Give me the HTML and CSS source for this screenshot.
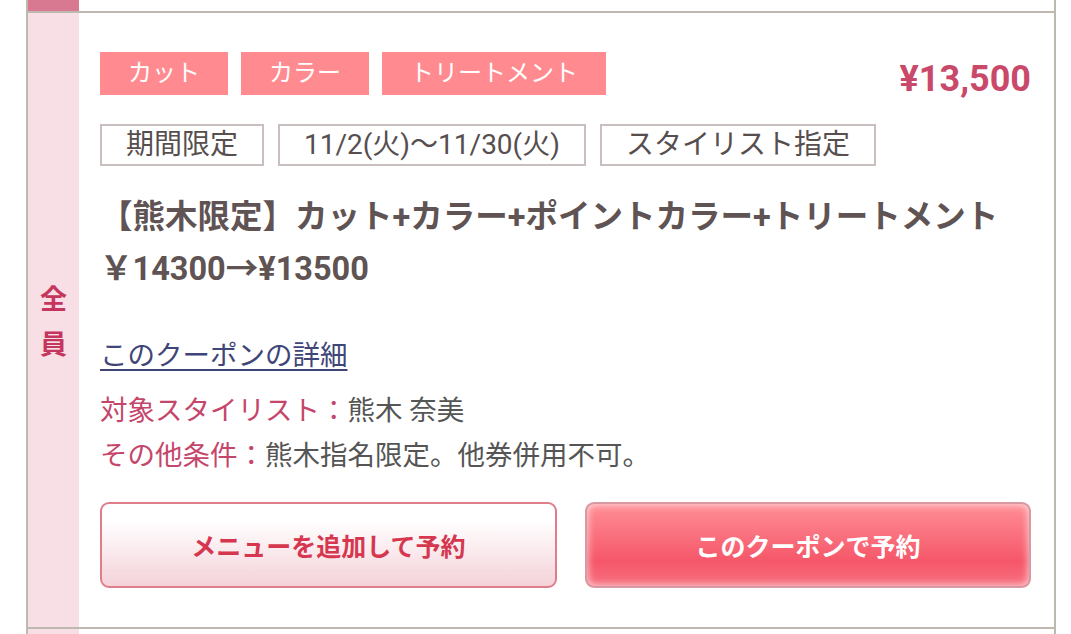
FILE: index.html
```html
<!DOCTYPE html>
<html lang="ja">
<head>
    <meta charset="UTF-8">
    <meta name="viewport" content="width=device-width, initial-scale=1.0">
    <title>クーポン</title>
    <link rel="stylesheet" href="styles.css">
</head>
<body>

    <div class="coupon-list">
        <!-- previous coupon (cut off at the top) -->
        <div class="coupon coupon-prev">
            <div class="coupon-side side-dark"></div>
            <div class="coupon-body"></div>
        </div>

        <div class="coupon">
            <div class="coupon-side">
                <span>全</span>
                <span>員</span>
            </div>
            <div class="coupon-body">
                <div class="top-row">
                    <div class="menu-tags">
                        <span class="menu-tag">カット</span>
                        <span class="menu-tag">カラー</span>
                        <span class="menu-tag">トリートメント</span>
                    </div>
                    <div class="price">¥13,500</div>
                </div>

                <div class="info-tags">
                    <span class="info-tag">期間限定</span>
                    <span class="info-tag">11/2(火)〜11/30(火)</span>
                    <span class="info-tag">スタイリスト指定</span>
                </div>

                <h2 class="coupon-title">【熊木限定】カット+カラー+ポイントカラー+トリートメント<br>￥14300→¥13500</h2>

                <a class="detail-link" href="#">このクーポンの詳細</a>

                <dl class="conditions">
                    <div class="cond-row">
                        <dt>対象スタイリスト：</dt>
                        <dd>熊木 奈美</dd>
                    </div>
                    <div class="cond-row">
                        <dt>その他条件：</dt>
                        <dd>熊木指名限定。他券併用不可。</dd>
                    </div>
                </dl>

                <div class="actions">
                    <button class="btn btn-sub">メニューを追加して予約</button>
                    <button class="btn btn-main">このクーポンで予約</button>
                </div>
            </div>
        </div>

        <!-- next coupon (cut off at the bottom) -->
        <div class="coupon coupon-next">
            <div class="coupon-side"></div>
            <div class="coupon-body"></div>
        </div>
    </div>

</body>
</html>
```

FILE: styles.css
```css
/* page */
html, body {
    margin: 0;
    padding: 0;
    background: #fff;
    height: 100%;
    overflow: hidden;
}

body {
    font-family: Roboto, "Noto Sans CJK JP", sans-serif;
    color: #5a5050;
}

/* list of coupons, framed left and right */
.coupon-list {
    margin-left: 26px;
    width: 1026px;
    border-left: 2px solid #bdb9b0;
    border-right: 2px solid #bdb9b0;
    min-height: 100%;
}

.coupon {
    display: flex;
    border-top: 2px solid #bdb9b0;
}

.coupon-prev {
    border-top: none;
    height: 11px;
}

.coupon-next {
    height: 60px;
}

.coupon-side {
    width: 51px;
    flex-shrink: 0;
    background: #f8dfe5;
    display: flex;
    flex-direction: column;
    justify-content: center;
    align-items: center;
    color: #c4365e;
    font-family: "Noto Sans CJK JP", sans-serif;
    font-size: 27px;
    font-weight: bold;
    line-height: 45px;
}

.side-dark {
    background: #d87891;
}

.coupon-body {
    flex: 1;
    padding: 39px 23px 39px 21px;
}

.coupon-prev .coupon-body,
.coupon-next .coupon-body {
    padding: 0;
}

/* tags + price */
.top-row {
    display: flex;
    justify-content: space-between;
    align-items: flex-start;
}

.menu-tags {
    display: flex;
    gap: 13px;
}

.menu-tag {
    background: #ff8b90;
    color: #fff;
    font-size: 24px;
    line-height: 43px;
    padding: 0 28px;
}

.price {
    font-weight: bold;
    font-size: 36px;
    line-height: 1;
    color: #c9496b;
    padding-top: 9px;
}

.info-tags {
    display: flex;
    gap: 14px;
    margin-top: 27px;
}

.info-tag {
    border: 2px solid #cabfbf;
    font-size: 28px;
    line-height: 38px;
    padding: 0 24px;
    color: #574e4e;
}

/* title */
.coupon-title {
    margin: 25px 0 0 0;
    font-size: 32.5px;
    font-weight: bold;
    line-height: 52px;
    color: #5f5353;
}

.detail-link {
    display: block;
    width: fit-content;
    margin-top: 43px;
    font-size: 27.5px;
    line-height: 36px;
    color: #3f4677;
    text-decoration: underline;
    text-underline-offset: 4px;
}

.conditions {
    margin: 14px 0 0 0;
    font-size: 27.5px;
    line-height: 45px;
}

.cond-row {
    display: flex;
}

.conditions dt {
    color: #c5466b;
}

.conditions dd {
    margin: 0;
    color: #555;
}

/* buttons */
.actions {
    display: grid;
    grid-template-columns: 457px 1fr;
    gap: 28px;
    margin-top: 24px;
}

.btn {
    height: 86px;
    border-radius: 9px;
    font-family: "Noto Sans CJK JP", sans-serif;
    font-size: 25px;
    font-weight: bold;
    cursor: pointer;
}

.btn-sub {
    border: 2px solid #e07d8b;
    background: linear-gradient(#ffffff 20%, #f4d2d9);
    color: #d6374f;
}

.btn-main {
    border: 2px solid #d79aa3;
    background: linear-gradient(#ff8e96, #f55769 70%, #f7707f);
    box-shadow: inset 0 0 8px rgba(255, 255, 255, 0.8);
    color: #fff;
}
```
